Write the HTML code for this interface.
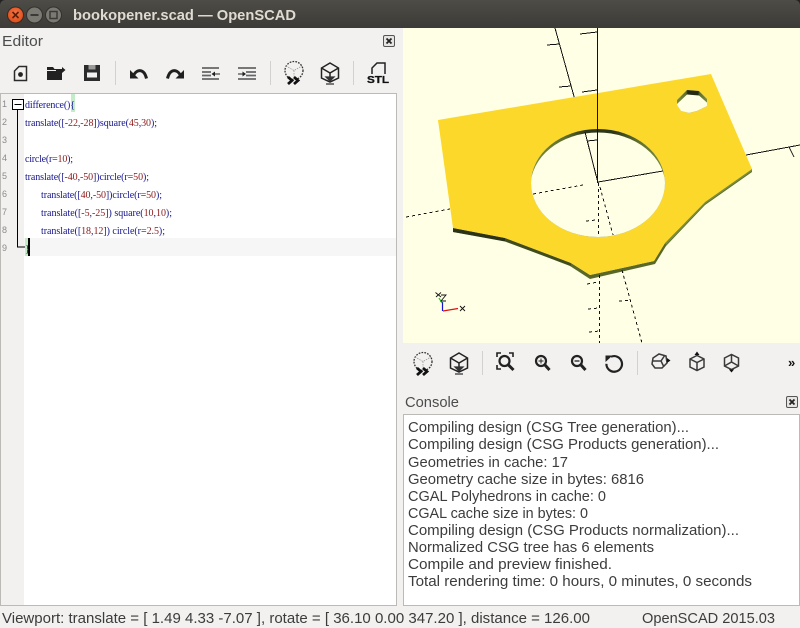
<!DOCTYPE html>
<html><head><meta charset="utf-8"><style>
html,body{margin:0;padding:0;width:800px;height:628px;overflow:hidden;background:#f2f1f0}
svg{display:block}
</style></head><body>
<svg width="800" height="628" viewBox="0 0 800 628" xmlns="http://www.w3.org/2000/svg" font-family="'Liberation Sans',sans-serif">
<defs>
<linearGradient id="tb" x1="0" y1="0" x2="0" y2="1"><stop offset="0" stop-color="#4e4c46"/><stop offset="1" stop-color="#3c3b37"/></linearGradient>
<radialGradient id="cl" cx=".5" cy=".4" r=".6"><stop offset="0" stop-color="#f2794a"/><stop offset="1" stop-color="#df4a16"/></radialGradient>
<linearGradient id="wall" gradientUnits="userSpaceOnUse" x1="531" y1="0" x2="665" y2="0">
<stop offset="0" stop-color="#7c8e3c"/><stop offset=".25" stop-color="#5f6e2a"/><stop offset=".42" stop-color="#2e3618"/><stop offset=".62" stop-color="#2e3618"/><stop offset=".8" stop-color="#5f6e2a"/><stop offset="1" stop-color="#7c8e3c"/></linearGradient>
<linearGradient id="wall2" gradientUnits="userSpaceOnUse" x1="677" y1="0" x2="707" y2="0">
<stop offset="0" stop-color="#7c8e3c"/><stop offset=".3" stop-color="#5f6e2a"/><stop offset=".36" stop-color="#242b12"/><stop offset=".7" stop-color="#242b12"/><stop offset=".76" stop-color="#5f6e2a"/><stop offset="1" stop-color="#7c8e3c"/></linearGradient>
<clipPath id="h1"><ellipse cx="598" cy="183" rx="67" ry="54"/></clipPath>
<clipPath id="h2"><path d="M677 100L687 90 699 91 707 99 707 106 697 111 689 113 681 111 677 105Z"/></clipPath>
<g id="prev" fill="none" stroke="#222">
<circle cx="10" cy="9.500" r="9" stroke-dasharray="1.700 1.200" stroke="#333" stroke-width="1.300"/>
<path d="M2 5l8 4.500 8-4.500M10 9.500v6" stroke="#999" stroke-width=".8" stroke-dasharray="1.500 1"/>
<path d="M4 16l4 3.500-4 3.500M10 16l4 3.500-4 3.500" stroke="#111" stroke-width="2.800"/>
</g>
<g id="rend" fill="none" stroke="#222" stroke-width="1.500">
<path d="M10 1l8.500 5v10L10 20 1.500 16V6zM1.500 6L10 11l8.500-5M10 11v5"/>
<path d="M6 15h8l-4 4zM6 22h8" fill="#333" stroke="#333" stroke-width="1.300"/>
</g>
</defs>

<!-- title bar -->
<rect width="800" height="28" fill="url(#tb)"/>
<path d="M0 0h5a5 5 0 0 0-5 5zM800 0h-5a5 5 0 0 1 5 5z" fill="#222"/>
<circle cx="15.500" cy="15" r="8" fill="url(#cl)" stroke="#3a2a22"/>
<path d="M12.500 12l6 6M18.500 12l-6 6" stroke="#5a1d08" stroke-width="1.600"/>
<circle cx="34.500" cy="15" r="8" fill="#7a7972" stroke="#33322e"/>
<rect x="30.500" y="14" width="8" height="2" fill="#3a3a36"/>
<circle cx="53.500" cy="15" r="8" fill="#7a7972" stroke="#33322e"/>
<rect x="50" y="11.500" width="7" height="7" fill="none" stroke="#3a3a36" stroke-width="1.500"/>
<text x="73" y="20" font-size="15" font-weight="700" fill="#dfdbd2" textLength="223" lengthAdjust="spacingAndGlyphs">bookopener.scad — OpenSCAD</text>

<!-- editor header -->
<text x="2" y="46" font-size="15" fill="#4c4c4c" textLength="41" lengthAdjust="spacingAndGlyphs">Editor</text>
<g id="cx1"><rect x="383.500" y="35.500" width="11" height="11" rx="1.500" fill="#e6e5e3" stroke="#555"/><path d="M386.500 38.500l5 5M391.500 38.500l-5 5" stroke="#222" stroke-width="1.800"/></g>

<!-- editor toolbar -->
<g fill="none" stroke="#2b2b2b">
<path d="M19 66.500h7.500v14h-12v-9.500z" stroke-width="1.500"/><circle cx="20.500" cy="74.500" r="2.400" fill="#222" stroke="none"/>
</g>
<path d="M47 67h6l1.500 2H62v1H47zM47 71h15v9H47z" fill="#222"/><path d="M56 69.500h6v-2.500l3.500 3-3.500 3v-2h-6z" fill="#222"/>
<path d="M84 65h16v16H84z" fill="#2b2b2b"/><rect x="88.500" y="65" width="7" height="4.500" fill="#9a9a98"/><rect x="87" y="72.500" width="10" height="5" fill="#f2f1f0"/>
<rect x="115" y="61" width="1" height="24" fill="#d2d1cf"/>
<path d="M134 74.500C137 69.500 144 68 146.500 78.500" fill="none" stroke="#1f1f1f" stroke-width="3"/><path d="M130 78.500V70l8.500 8.500z" fill="#1f1f1f"/>
<path d="M180 74.500C177 69.500 170 68 167.500 78.500" fill="none" stroke="#1f1f1f" stroke-width="3"/><path d="M184 78.500V70l-8.500 8.500z" fill="#1f1f1f"/>
<g stroke="#666" stroke-width="1.800" fill="none">
<path d="M202 68h17M202 72h9M202 75.500h9M202 79h17"/><path d="M246 68h10M246 72h10M246 75.500h10M238 79h18M238 68h8"/>
</g>
<path d="M220 73.500h-5v-2l-3.500 2.500 3.500 2.500v-2h5zM238 73.500h4.500v-2l3.500 2.500-3.500 2.500v-2H238z" fill="#222"/>
<rect x="270" y="61" width="1" height="24" fill="#d2d1cf"/>
<use href="#prev" x="284" y="61"/>
<use href="#rend" x="320" y="62"/>
<rect x="353" y="61" width="1" height="24" fill="#d2d1cf"/>
<path d="M372 74v-6l5-5h8v11" fill="none" stroke="#222" stroke-width="1.500"/>
<text x="367" y="83" font-size="10" font-weight="700" fill="#111" textLength="22" lengthAdjust="spacingAndGlyphs" stroke="#111" stroke-width=".3">STL</text>

<!-- editor -->
<rect x=".5" y="93.500" width="396" height="512" fill="#fff" stroke="#bcbab7"/>
<rect x="1" y="94" width="23" height="511" fill="#f2f1f0"/>
<rect x="24" y="238" width="372" height="18" fill="#f6f6f6"/>
<rect x="71" y="94" width="4" height="18" fill="#c4ecc8"/>
<rect x="25" y="238" width="3" height="18" fill="#c4ecc8"/>
<rect x="28" y="238" width="2" height="18" fill="#000"/>
<path d="M17.500 109v138H25" fill="none" stroke="#000"/>
<rect x="12.500" y="99.500" width="11" height="10" fill="#fff" stroke="#000"/>
<path d="M14.500 104.500h7" stroke="#000"/>
<g font-size="9" fill="#8a8a8a">
<text x="2" y="107">1</text><text x="2" y="125">2</text><text x="2" y="143">3</text><text x="2" y="161">4</text><text x="2" y="179">5</text><text x="2" y="197">6</text><text x="2" y="215">7</text><text x="2" y="233">8</text><text x="2" y="251">9</text>
</g>
<g font-family="'Liberation Serif',serif" font-size="10" fill="#16168e">
<text x="25" y="108" textLength="50">difference(){</text>
<text x="25" y="126" textLength="132">translate([<tspan fill="#8b1a1a">-22</tspan>,<tspan fill="#8b1a1a">-28</tspan>])square(<tspan fill="#8b1a1a">45</tspan>,<tspan fill="#8b1a1a">30</tspan>);</text>
<text x="25" y="162" textLength="48">circle(r=<tspan fill="#8b1a1a">10</tspan>);</text>
<text x="25" y="180" textLength="124">translate([<tspan fill="#8b1a1a">-40</tspan>,<tspan fill="#8b1a1a">-50</tspan>])circle(r=<tspan fill="#8b1a1a">50</tspan>);</text>
<text x="41" y="198" textLength="121">translate([<tspan fill="#8b1a1a">40</tspan>,<tspan fill="#8b1a1a">-50</tspan>])circle(r=<tspan fill="#8b1a1a">50</tspan>);</text>
<text x="41" y="216" textLength="131">translate([<tspan fill="#8b1a1a">-5</tspan>,<tspan fill="#8b1a1a">-25</tspan>])  square(<tspan fill="#8b1a1a">10</tspan>,<tspan fill="#8b1a1a">10</tspan>);</text>
<text x="41" y="234" textLength="124">translate([<tspan fill="#8b1a1a">18</tspan>,<tspan fill="#8b1a1a">12</tspan>])  circle(r=<tspan fill="#8b1a1a">2.5</tspan>);</text>
<text x="25" y="252">}</text>
</g>

<!-- viewport -->
<rect x="403" y="28" width="397" height="315" fill="#ffffe5"/>
<g fill="none" stroke="#111" shape-rendering="crispEdges">
<path d="M555 28L575 100M597.500 28V92M746 155L800 145M580 34l17-2M547 45l13-1M559 87l12-1M582 92l15-2M789 147l5 10"/>
</g>
<!-- model: side walls -->
<path d="M453 228L505 238 571 263 590 275 654 261 665 243 705 202 752 169 752 172 705 205 666 246 655 264 590 279 570 266 505 241 453 232Z" fill="#5a6827"/>
<path d="M453 228L505 238 505 241.500 453 232Z" fill="#2b3316"/>
<path d="M505 238L571 263 571 266 505 241.500Z" fill="#414c1e"/>
<path d="M665 243L705 202 752 169 752 171 705 204 666 245Z" fill="#7c8e3c"/>
<!-- model: top -->
<path fill-rule="evenodd" fill="#fcd82b" d="M438 120L711 74 752 169 705 202 665 243 654 261 590 275 571 263 505 238 453 228Z M531 183a67 54 0 1 0 134 0a67 54 0 1 0-134 0Z M677 100L687 90 699 91 707 99 707 106 697 111 689 113 681 111 677 105Z"/>
<!-- inner hole walls -->
<g clip-path="url(#h1)">
<rect x="531" y="129" width="134" height="108" fill="url(#wall)"/>
<ellipse cx="598" cy="186.500" rx="67.500" ry="54" fill="#ffffe5"/>
</g>
<g clip-path="url(#h2)">
<rect x="677" y="90" width="30" height="23" fill="url(#wall2)"/>
<path d="M677 104L687 94.500 699 95.500 708 103.500 707 110 697 115 689 117 681 115 676 109Z" fill="#ffffe5"/>
</g>
<!-- axes over model -->
<g stroke="#111" fill="none" shape-rendering="crispEdges">
<path d="M597.500 92V183M585 132L598 183M587 141l10-1M598 182L663 171"/>
<path d="M533 194L583 185M406 217L450 209M598.500 183V237M599.300 275V343M600 187L613 235M622 270L642 343M586 221l10-1M587 284l11-2M588 309l11-1M589 332l11-1M619 301l12-1" stroke-dasharray="3 3"/>
</g>
<!-- gizmo -->
<path d="M443 311L458 308.500" stroke="#e01010" stroke-width="1.200"/>
<path d="M442.500 311V302" stroke="#1414d0" stroke-width="1.200"/>
<path d="M442 303L439 298" stroke="#10d010" stroke-width="1.200"/>
<g stroke="#111" fill="none" stroke-width=".9">
<path d="M435.500 292.500L441 297M441 292.500L436 297"/>
<path d="M441 295h5l-5 6h5"/>
<path d="M460 306l5 5M465 306l-5 5"/>
</g>

<!-- viewer toolbar -->
<use href="#prev" x="413" y="352"/>
<use href="#rend" x="449" y="352"/>
<rect x="482" y="351" width="1" height="24" fill="#d2d1cf"/>
<g fill="none" stroke="#222">
<path d="M497 357v-4h4M509 353h4v4M497 365v4h4" stroke-width="1.600"/>
<circle cx="504.500" cy="361" r="5" stroke-width="2.200"/><path d="M508.500 365l5 5" stroke-width="3"/>
<circle cx="541" cy="361" r="5" stroke-width="2.200"/><path d="M545 365l4.500 5" stroke-width="3"/><path d="M538.500 361h5M541 358.500v5" stroke-width="1"/>
<circle cx="577" cy="361" r="5" stroke-width="2.200"/><path d="M581 365l4.500 5" stroke-width="3"/><path d="M574.500 361h5" stroke-width="1.300"/>
<path d="M611 356.800a7.800 7.800 0 1 1-4.600 7" stroke-width="2.200"/>
</g>
<path d="M605.500 355.500h7l-7 6.500z" fill="#222"/>
<rect x="637" y="351" width="1" height="24" fill="#d2d1cf"/>
<g fill="none" stroke="#3a3a3a" stroke-width="1.500">
<path d="M653 358l6-4 7 2 1 7-5 5h-7l-3-4zM653 361h8l4-6M661 361l3 6"/>
<path d="M690 359l7-3.500 7 3.500v8l-7 3.500-7-3.500zM690 359l7 3.500 7-3.500M697 362.500v8"/>
<path d="M724.500 358l7-3.500 7 3.500v8l-7 3.500-7-3.500zM724.500 366l7-4 7 4M731.500 354.500v7.500"/>
</g>
<path d="M667 358l3.500 2.500-3.500 2.500zM694.500 355l2.500-3.500 2.500 3.500zM729 369.500h5l-2.500 3z" fill="#111"/>
<text x="788" y="367" font-size="13" font-weight="700" fill="#111">»</text>

<!-- console -->
<text x="405" y="407" font-size="15" fill="#4c4c4c" textLength="54" lengthAdjust="spacingAndGlyphs">Console</text>
<use href="#cx1" x="403" y="361"/>
<rect x="403.500" y="414.500" width="396" height="191" fill="#fff" stroke="#bcbab7"/>
<g font-size="15" fill="#3c3c3c">
<text x="408" y="432" textLength="281" lengthAdjust="spacingAndGlyphs">Compiling design (CSG Tree generation)...</text>
<text x="408" y="449" textLength="311" lengthAdjust="spacingAndGlyphs">Compiling design (CSG Products generation)...</text>
<text x="408" y="467" textLength="160" lengthAdjust="spacingAndGlyphs">Geometries in cache: 17</text>
<text x="408" y="484" textLength="236" lengthAdjust="spacingAndGlyphs">Geometry cache size in bytes: 6816</text>
<text x="408" y="501" textLength="198" lengthAdjust="spacingAndGlyphs">CGAL Polyhedrons in cache: 0</text>
<text x="408" y="518" textLength="180" lengthAdjust="spacingAndGlyphs">CGAL cache size in bytes: 0</text>
<text x="408" y="535" textLength="331" lengthAdjust="spacingAndGlyphs">Compiling design (CSG Products normalization)...</text>
<text x="408" y="552" textLength="246" lengthAdjust="spacingAndGlyphs">Normalized CSG tree has 6 elements</text>
<text x="408" y="569" textLength="204" lengthAdjust="spacingAndGlyphs">Compile and preview finished.</text>
<text x="408" y="586" textLength="344" lengthAdjust="spacingAndGlyphs">Total rendering time: 0 hours, 0 minutes, 0 seconds</text>
</g>

<!-- status bar -->
<text x="2" y="623" font-size="15" fill="#3c3c3c" textLength="588" lengthAdjust="spacingAndGlyphs">Viewport: translate = [ 1.49 4.33 -7.07 ], rotate = [ 36.10 0.00 347.20 ], distance = 126.00</text>
<text x="642" y="623" font-size="15" fill="#3c3c3c" textLength="133" lengthAdjust="spacingAndGlyphs">OpenSCAD 2015.03</text>
</svg>
</body></html>
